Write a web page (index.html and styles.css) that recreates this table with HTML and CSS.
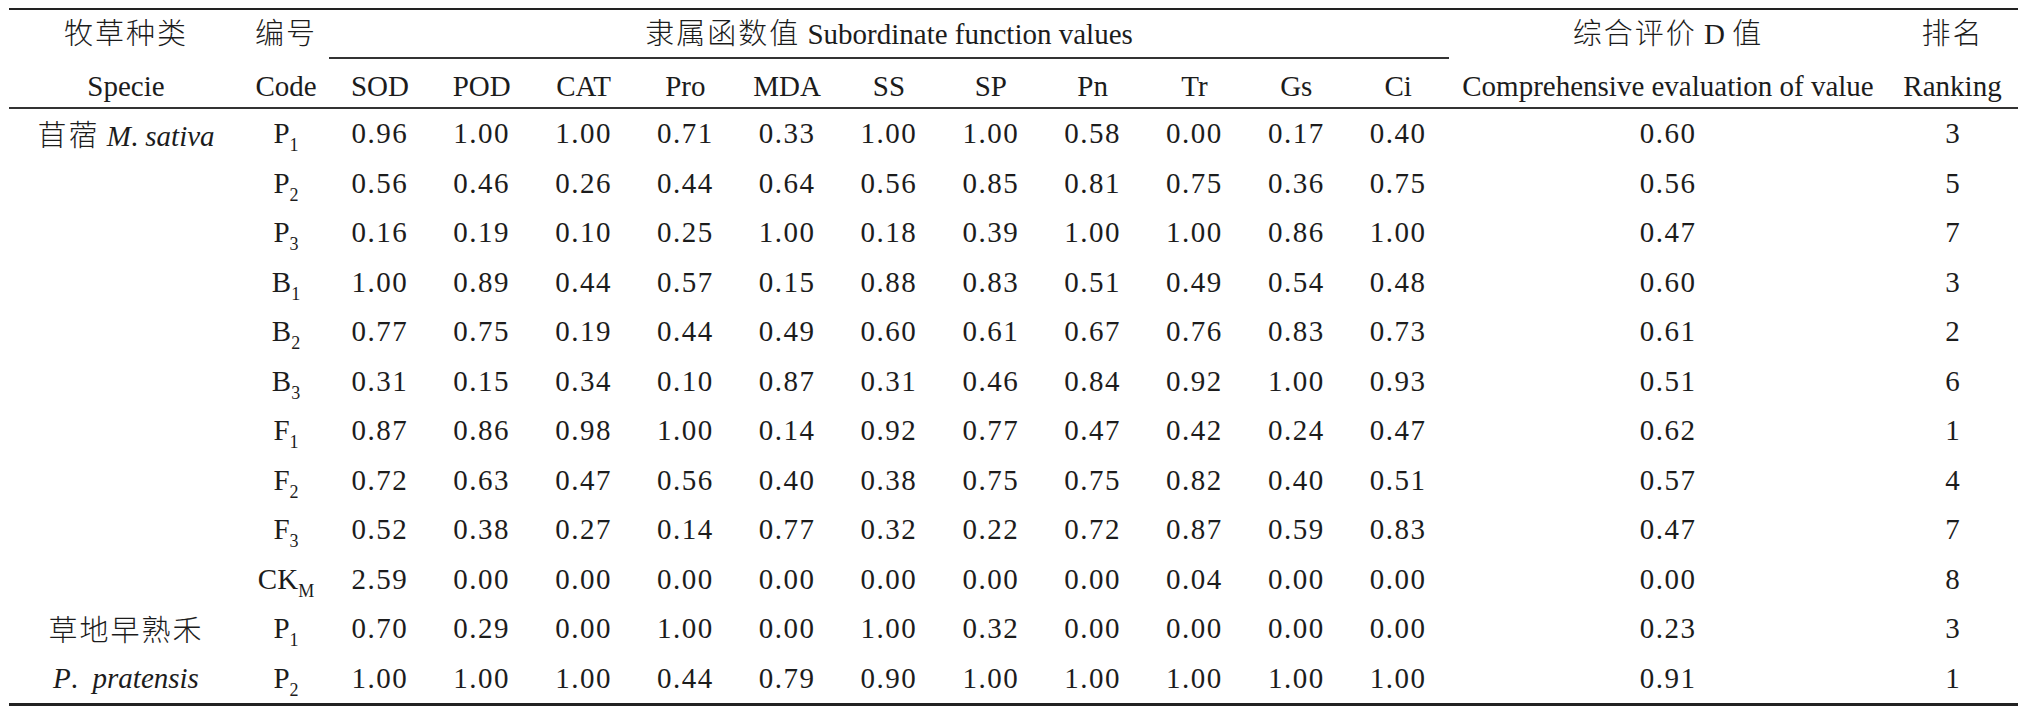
FILE: index.html
```html
<!DOCTYPE html>
<html lang="zh">
<head>
<meta charset="utf-8">
<title>隶属函数值</title>
<link rel="stylesheet" href="styles.css">
</head>
<body>
<div class="table">
  <div class="h1 cjk">牧草种类</div>
  <div class="h1 cjk">编号</div>
  <div class="h1 span11"><span class="cjk">隶属函数值</span> Subordinate function values</div>
  <div class="h1"><span class="cjk">综合评价</span> D <span class="cjk">值</span></div>
  <div class="h1 cjk">排名</div>

  <div class="h2">Specie</div>
  <div class="h2">Code</div>
  <div class="h2">SOD</div>
  <div class="h2">POD</div>
  <div class="h2">CAT</div>
  <div class="h2">Pro</div>
  <div class="h2">MDA</div>
  <div class="h2">SS</div>
  <div class="h2">SP</div>
  <div class="h2">Pn</div>
  <div class="h2">Tr</div>
  <div class="h2">Gs</div>
  <div class="h2">Ci</div>
  <div class="h2">Comprehensive evaluation of value</div>
  <div class="h2">Ranking</div>

  <div class="rule"></div>

  <div class="c"><span class="cjk">苜蓿</span> <i>M</i>. <i>sativa</i></div>
  <div class="c">P<sub>1</sub></div>
  <div class="c n">0.96</div><div class="c n">1.00</div><div class="c n">1.00</div><div class="c n">0.71</div><div class="c n">0.33</div><div class="c n">1.00</div><div class="c n">1.00</div><div class="c n">0.58</div><div class="c n">0.00</div><div class="c n">0.17</div><div class="c n">0.40</div>
  <div class="c n">0.60</div><div class="c">3</div>

  <div class="c"></div>
  <div class="c">P<sub>2</sub></div>
  <div class="c n">0.56</div><div class="c n">0.46</div><div class="c n">0.26</div><div class="c n">0.44</div><div class="c n">0.64</div><div class="c n">0.56</div><div class="c n">0.85</div><div class="c n">0.81</div><div class="c n">0.75</div><div class="c n">0.36</div><div class="c n">0.75</div>
  <div class="c n">0.56</div><div class="c">5</div>

  <div class="c"></div>
  <div class="c">P<sub>3</sub></div>
  <div class="c n">0.16</div><div class="c n">0.19</div><div class="c n">0.10</div><div class="c n">0.25</div><div class="c n">1.00</div><div class="c n">0.18</div><div class="c n">0.39</div><div class="c n">1.00</div><div class="c n">1.00</div><div class="c n">0.86</div><div class="c n">1.00</div>
  <div class="c n">0.47</div><div class="c">7</div>

  <div class="c"></div>
  <div class="c">B<sub>1</sub></div>
  <div class="c n">1.00</div><div class="c n">0.89</div><div class="c n">0.44</div><div class="c n">0.57</div><div class="c n">0.15</div><div class="c n">0.88</div><div class="c n">0.83</div><div class="c n">0.51</div><div class="c n">0.49</div><div class="c n">0.54</div><div class="c n">0.48</div>
  <div class="c n">0.60</div><div class="c">3</div>

  <div class="c"></div>
  <div class="c">B<sub>2</sub></div>
  <div class="c n">0.77</div><div class="c n">0.75</div><div class="c n">0.19</div><div class="c n">0.44</div><div class="c n">0.49</div><div class="c n">0.60</div><div class="c n">0.61</div><div class="c n">0.67</div><div class="c n">0.76</div><div class="c n">0.83</div><div class="c n">0.73</div>
  <div class="c n">0.61</div><div class="c">2</div>

  <div class="c"></div>
  <div class="c">B<sub>3</sub></div>
  <div class="c n">0.31</div><div class="c n">0.15</div><div class="c n">0.34</div><div class="c n">0.10</div><div class="c n">0.87</div><div class="c n">0.31</div><div class="c n">0.46</div><div class="c n">0.84</div><div class="c n">0.92</div><div class="c n">1.00</div><div class="c n">0.93</div>
  <div class="c n">0.51</div><div class="c">6</div>

  <div class="c"></div>
  <div class="c">F<sub>1</sub></div>
  <div class="c n">0.87</div><div class="c n">0.86</div><div class="c n">0.98</div><div class="c n">1.00</div><div class="c n">0.14</div><div class="c n">0.92</div><div class="c n">0.77</div><div class="c n">0.47</div><div class="c n">0.42</div><div class="c n">0.24</div><div class="c n">0.47</div>
  <div class="c n">0.62</div><div class="c">1</div>

  <div class="c"></div>
  <div class="c">F<sub>2</sub></div>
  <div class="c n">0.72</div><div class="c n">0.63</div><div class="c n">0.47</div><div class="c n">0.56</div><div class="c n">0.40</div><div class="c n">0.38</div><div class="c n">0.75</div><div class="c n">0.75</div><div class="c n">0.82</div><div class="c n">0.40</div><div class="c n">0.51</div>
  <div class="c n">0.57</div><div class="c">4</div>

  <div class="c"></div>
  <div class="c">F<sub>3</sub></div>
  <div class="c n">0.52</div><div class="c n">0.38</div><div class="c n">0.27</div><div class="c n">0.14</div><div class="c n">0.77</div><div class="c n">0.32</div><div class="c n">0.22</div><div class="c n">0.72</div><div class="c n">0.87</div><div class="c n">0.59</div><div class="c n">0.83</div>
  <div class="c n">0.47</div><div class="c">7</div>

  <div class="c"></div>
  <div class="c">CK<sub>M</sub></div>
  <div class="c n">2.59</div><div class="c n">0.00</div><div class="c n">0.00</div><div class="c n">0.00</div><div class="c n">0.00</div><div class="c n">0.00</div><div class="c n">0.00</div><div class="c n">0.00</div><div class="c n">0.04</div><div class="c n">0.00</div><div class="c n">0.00</div>
  <div class="c n">0.00</div><div class="c">8</div>

  <div class="c cjk">草地早熟禾</div>
  <div class="c">P<sub>1</sub></div>
  <div class="c n">0.70</div><div class="c n">0.29</div><div class="c n">0.00</div><div class="c n">1.00</div><div class="c n">0.00</div><div class="c n">1.00</div><div class="c n">0.32</div><div class="c n">0.00</div><div class="c n">0.00</div><div class="c n">0.00</div><div class="c n">0.00</div>
  <div class="c n">0.23</div><div class="c">3</div>

  <div class="c"><i>P</i>.&nbsp;&nbsp;<i>pratensis</i></div>
  <div class="c">P<sub>2</sub></div>
  <div class="c n">1.00</div><div class="c n">1.00</div><div class="c n">1.00</div><div class="c n">0.44</div><div class="c n">0.79</div><div class="c n">0.90</div><div class="c n">1.00</div><div class="c n">1.00</div><div class="c n">1.00</div><div class="c n">1.00</div><div class="c n">1.00</div>
  <div class="c n">0.91</div><div class="c">1</div>
</div>
</body>
</html>
```

FILE: styles.css
```css
html, body {
  background: #ffffff;
}

body {
  margin: 8px 8px 8px 9px;
  color: #1c1c1c;
  font-family: "Liberation Serif", "Noto Sans CJK SC", serif;
  font-size: 29px;
}

.table {
  display: grid;
  width: 2009px;
  grid-template-columns: 234px 86px repeat(11, 1fr) 438px 131px;
  grid-template-rows: 49px 48px 2px repeat(12, 49.5px);
  border-top: 2px solid #222;
  border-bottom: 3px solid #222;
}

.table > div {
  text-align: center;
  white-space: nowrap;
  overflow: visible;
}

.cjk {
  font-family: "Noto Sans CJK SC", sans-serif;
  font-weight: 300;
  letter-spacing: 2px;
}

.h1 {
  line-height: 43px;
}

.span11 {
  grid-column: span 11;
  border-bottom: 2px solid #333;
}

.h2 {
  line-height: 55px;
}

.c {
  line-height: 49.5px;
}

.rule {
  grid-column: 1 / -1;
  background: #333;
}

.n {
  letter-spacing: 1.5px;
}

sub {
  font-size: 18px;
  vertical-align: -8px;
  line-height: 0;
}
```
